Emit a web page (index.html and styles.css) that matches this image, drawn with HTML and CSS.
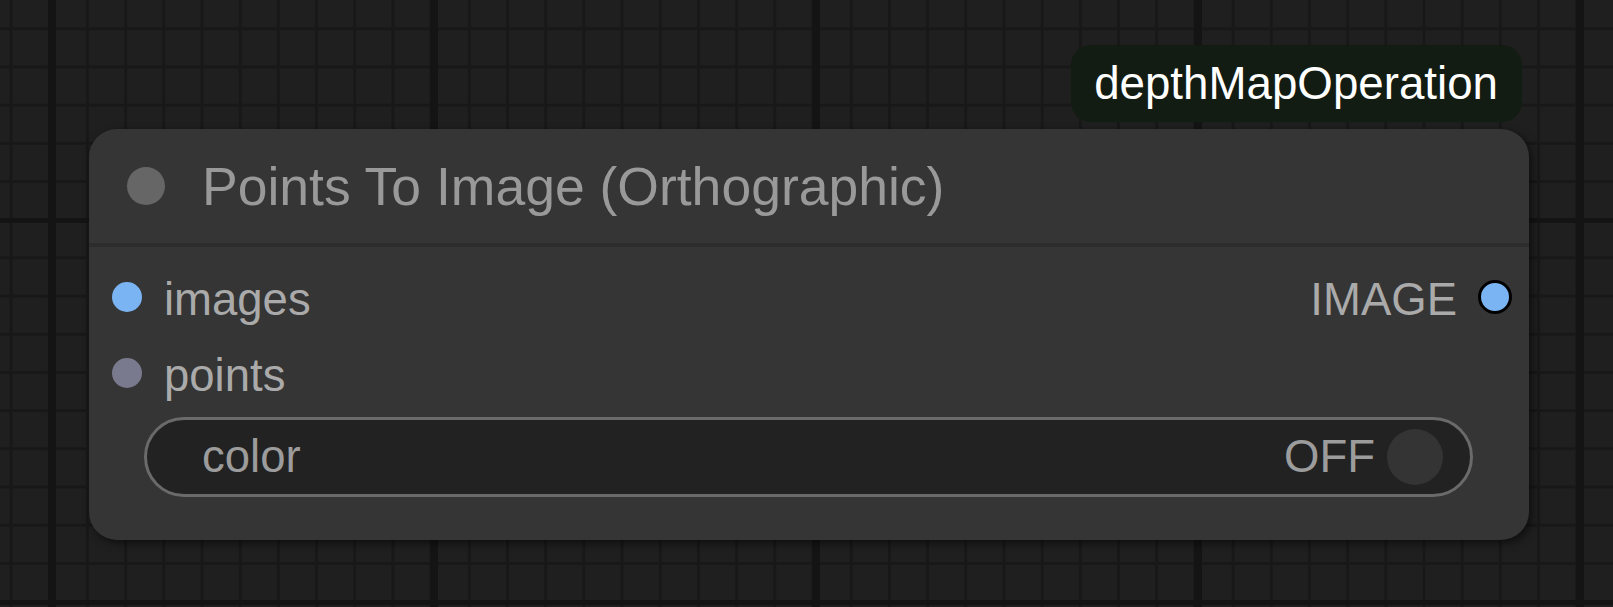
FILE: index.html
```html
<!DOCTYPE html>
<html lang="en">
<head>
<meta charset="utf-8">
<title>Points To Image (Orthographic)</title>
<link rel="stylesheet" href="styles.css">
</head>
<body>
<div class="graph">
  <div class="node-group">
    <div class="badge">depthMapOperation</div>
    <div class="node">
      <div class="node-title">
        <span class="title-dot"></span>
        <span class="title-text">Points To Image (Orthographic)</span>
      </div>
      <div class="node-body">
        <div class="slot-row">
          <div class="slot-in"><span class="dot dot-image"></span><span class="slot-label">images</span></div>
          <div class="slot-out"><span class="slot-label">IMAGE</span><span class="dot dot-out"></span></div>
        </div>
        <div class="slot-row">
          <div class="slot-in"><span class="dot dot-points"></span><span class="slot-label">points</span></div>
        </div>
        <div class="widget">
          <span class="widget-label">color</span>
          <span class="widget-value">OFF</span>
          <span class="toggle-knob"></span>
        </div>
      </div>
    </div>
  </div>
</div>
</body>
</html>
```

FILE: styles.css
```css
html, body {
  margin: 0;
  padding: 0;
}

body {
  width: 1613px;
  height: 607px;
  overflow: hidden;
  font-family: "Liberation Sans", Arial, sans-serif;
  background-color: #1f1f1f;
}

.graph {
  position: relative;
  width: 1613px;
  height: 607px;
  background-color: #1f1f1f;
  background-image:
    linear-gradient(to right, #141414 0, #141414 8px, transparent 8px),
    linear-gradient(to bottom, #141414 0, #141414 5px, transparent 5px),
    linear-gradient(to right, #181818 0, #181818 3px, transparent 3px),
    linear-gradient(to bottom, #181818 0, #181818 3px, transparent 3px);
  background-size:
    382px 100%,
    100% 382px,
    38.2px 100%,
    100% 38.2px;
  background-position:
    48px 0,
    0 218px,
    9.6px 0,
    0 27.3px;
}

.node-group {
  position: absolute;
  left: 89px;
  top: 45px;
  width: 1440px;
  display: flex;
  flex-direction: column;
}

.badge {
  align-self: flex-end;
  margin-right: 7px;
  height: 77px;
  box-sizing: border-box;
  padding: 0 24px 0 23px;
  display: flex;
  align-items: center;
  background: #131c13;
  border-radius: 20px;
  color: #ffffff;
  font-size: 45.7px;
  white-space: nowrap;
}

.node {
  margin-top: 7px;
  height: 411px;
  box-sizing: border-box;
  background: #353535;
  border-radius: 28px;
  box-shadow: 3px 3px 8px rgba(0, 0, 0, 0.55);
  display: flex;
  flex-direction: column;
}

.node-title {
  height: 114px;
  border-bottom: 4px solid #2c2c2c;
  display: flex;
  align-items: center;
  padding-left: 38px;
}

.title-dot {
  width: 38px;
  height: 38px;
  border-radius: 50%;
  background: #666666;
  margin-right: 37px;
  flex: none;
}

.title-text {
  color: #999999;
  font-size: 53.5px;
  white-space: nowrap;
  margin-top: 1px;
}

.node-body {
  display: flex;
  flex-direction: column;
  padding: 12px 0 43px;
}

.slot-row {
  height: 76px;
  display: flex;
  align-items: center;
  justify-content: space-between;
}

.slot-in {
  display: flex;
  align-items: center;
  padding-left: 23px;
}

.slot-out {
  display: flex;
  align-items: center;
  padding-right: 17px;
  margin-left: auto;
}

.slot-label {
  color: #aaaaaa;
  font-size: 45.5px;
  white-space: nowrap;
  margin-top: 6px;
}

.dot {
  border-radius: 50%;
  flex: none;
}

.dot-image {
  width: 30px;
  height: 30px;
  background: #7ab4f2;
  margin-right: 22px;
}

.dot-points {
  width: 30px;
  height: 30px;
  background: #797a8e;
  margin-right: 22px;
}

.dot-out {
  width: 28px;
  height: 28px;
  background: #7ab4f2;
  border: 3px solid #000000;
  margin-left: 21px;
}

.widget {
  margin: 6px 56px 0 55px;
  height: 80px;
  box-sizing: border-box;
  border: 3px solid #6a6a6a;
  border-radius: 40px;
  background: #222222;
  display: flex;
  align-items: center;
  padding: 0 27px 0 55px;
}

.widget-label {
  color: #9c9c9c;
  font-size: 45.5px;
  flex: 1;
}

.widget-value {
  color: #9c9c9c;
  font-size: 45.5px;
  margin-right: 12px;
}

.toggle-knob {
  width: 56px;
  height: 56px;
  border-radius: 50%;
  background: #343434;
  flex: none;
}
```
